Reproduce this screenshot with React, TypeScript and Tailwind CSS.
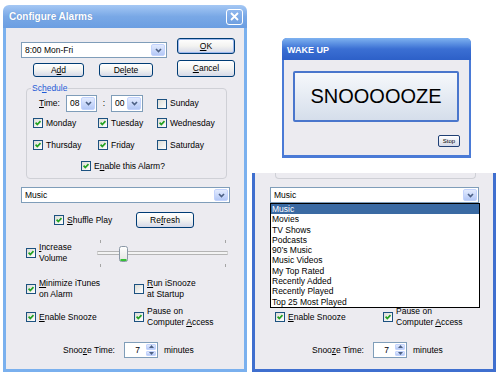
import React from 'react';

// Two "Configure Alarms" screenshots + the WAKE UP popup, XP look

const font = "font-['Liberation_Sans',Arial,sans-serif]";

const Check = ({ on = false }: { on?: boolean }) => (
  <span className="relative block w-[10px] h-[10px] shrink-0 border border-[#1c5180] bg-linear-to-br from-[#dcdcd6] to-white">
    {on && (
      <svg viewBox="0 0 8 8" className="absolute inset-0 w-[8px] h-[8px]">
        <path d="M1.6 3.7 3.3 5.5 6.5 2.2" fill="none" stroke="#21a121" strokeWidth="1.7" />
      </svg>
    )}
  </span>
);

const CheckRow = ({
  on = false, children, className = '',
}: { on?: boolean; children: React.ReactNode; className?: string }) => (
  <div className={`flex items-center gap-[3px] ${className}`}>
    <Check on={on} />
    <span>{children}</span>
  </div>
);

const DropBtn = () => (
  <span className="flex items-center justify-center w-[14px] h-full shrink-0 rounded-[2px] border border-[#c3d3fd] bg-linear-to-b from-[#e3ebfe] to-[#b4c8f6]">
    <svg viewBox="0 0 7 5" className="w-[7px] h-[5px]">
      <path d="M1 1 3.5 3.6 6 1" fill="none" stroke="#4d6185" strokeWidth="1.6" />
    </svg>
  </span>
);

const Combo = ({ text, className = '' }: { text: string; className?: string }) => (
  <div className={`flex items-center bg-white border border-[#7f9db9] p-[1px] ${className}`}>
    <span className="flex-1 pl-[2px] leading-none">{text}</span>
    <DropBtn />
  </div>
);

const Btn = ({
  children, className = '', def = false,
}: { children: React.ReactNode; className?: string; def?: boolean }) => (
  <div
    className={`flex items-center justify-center rounded-[3px] border border-[#003c74] bg-linear-to-b from-white via-[#f3f3f1] to-[#d5d9e8] ${
      def ? 'shadow-[inset_0_0_0_1px_#9db8ef]' : ''
    } ${className}`}
  >
    {children}
  </div>
);

const SpinBtn = ({ up = false }: { up?: boolean }) => (
  <span className="flex-1 flex items-center justify-center rounded-[1px] border border-[#c3d3fd] bg-linear-to-b from-[#e3ebfe] to-[#b4c8f6]">
    <svg viewBox="0 0 5 3" className="w-[5px] h-[3px]">
      <path d={up ? 'M0 3 2.5 0 5 3Z' : 'M0 0 2.5 3 5 0Z'} fill="#4d6185" />
    </svg>
  </span>
);

const Slider = () => (
  <svg width="131" height="28" viewBox="0 0 131 28">
    <defs>
      <linearGradient id="thumb" x1="0" y1="0" x2="0" y2="1">
        <stop offset="0" stopColor="#ffffff" />
        <stop offset="1" stopColor="#e4e4e0" />
      </linearGradient>
    </defs>
    <rect x="3" y="0" width="1" height="3" fill="#a5a5a5" />
    <rect x="128" y="0" width="1" height="3" fill="#a5a5a5" />
    <rect x="3" y="24" width="1" height="3" fill="#a5a5a5" />
    <rect x="128" y="24" width="1" height="3" fill="#a5a5a5" />
    <rect x="0" y="11.5" width="131" height="3" rx="1" fill="#f3f3f3" stroke="#b4b4b4" strokeWidth="1" />
    <rect x="22.5" y="6.5" width="8" height="15" rx="2" fill="url(#thumb)" stroke="#8b98a6" />
    <rect x="23.5" y="19" width="6" height="2" fill="#36c136" />
  </svg>
);

const items = [
  'Music', 'Movies', 'TV Shows', 'Podcasts', '90’s Music', 'Music Videos',
  'My Top Rated', 'Recently Added', 'Recently Played', 'Top 25 Most Played',
];

const List = () => (
  <div className="absolute left-0 right-[-1px] top-full z-10 flex flex-col bg-white border border-black">
    {items.map((t, i) => (
      <div
        key={t}
        className={`h-[10.3px] leading-[10.3px] pl-[1px] whitespace-nowrap ${i === 0 ? 'bg-[#3a6aa3] text-white' : ''}`}
      >
        {t}
      </div>
    ))}
  </div>
);

const Upper = () => (
  <div className="flex flex-col">
    <div className="flex pt-[10px]">
      <div className="ml-[15px] w-[146px] flex flex-col">
        <Combo text="8:00 Mon-Fri" className="mt-[4px] h-[16px]" />
        <div className="flex mt-[5px]">
          <Btn className="ml-[12px] w-[51px] h-[14px]">A<u>d</u>d</Btn>
          <Btn className="ml-[15px] w-[54px] h-[14px]">De<u>l</u>ete</Btn>
        </div>
      </div>
      <div className="ml-[10px] w-[58px] flex flex-col">
        <Btn def className="h-[16px]"><u>O</u>K</Btn>
        <Btn className="mt-[6px] h-[17px]"><u>C</u>ancel</Btn>
      </div>
    </div>

    <div className="relative ml-[20px] mt-[11px] w-[201px] h-[91px] border border-[#cfd0d6] rounded-[4px] pt-[6px]">
      <span className="absolute -top-[6px] left-[4px] px-[1px] bg-[#ecebf0] text-[#1f5bd6] leading-[11px]">
        Sc<u>h</u>edule
      </span>
      <div className="flex items-center h-[17px] pl-[12px]">
        <span className="w-[27px]"><u>T</u>ime:</span>
        <Combo text="08" className="w-[31px] h-full" />
        <span className="w-[14px] text-center">:</span>
        <Combo text="00" className="w-[32px] h-full" />
        <CheckRow className="ml-[14px]">Sunday</CheckRow>
      </div>
      <div className="grid grid-cols-[65px_59px_1fr] grid-rows-[20px_20px] gap-y-[2px] mt-[1px] pl-[6px] items-center">
        <CheckRow on>Monday</CheckRow>
        <CheckRow on>Tuesday</CheckRow>
        <CheckRow on>Wednesday</CheckRow>
        <CheckRow on>Thursday</CheckRow>
        <CheckRow on>Friday</CheckRow>
        <CheckRow>Saturday</CheckRow>
      </div>
      <div className="flex items-center h-[20px] mt-[1px] pl-[54px]">
        <CheckRow on>E<u>n</u>able this Alarm?</CheckRow>
      </div>
    </div>
  </div>
);

const Lower = ({ open = false }: { open?: boolean }) => {
  // rows that sit under the open list are not seen
  const hid = open ? 'invisible' : '';
  return (
    <div className="flex flex-col pb-[11px]">
      <div className="relative ml-[15px] mt-[8px] w-[209px] h-[16px]">
        <Combo text="Music" className="h-full" />
        {open && <List />}
      </div>
      <div className={`flex items-center ml-[48px] mt-[9px] h-[16px] ${hid}`}>
        <CheckRow on className="w-[82px]"><u>S</u>huffle Play</CheckRow>
        <Btn className="w-[58px] h-full">Re<u>f</u>resh</Btn>
      </div>
      <div className={`flex items-center ml-[20px] mt-[12px] h-[28px] ${hid}`}>
        <CheckRow on className="w-[71px] -mt-[2px]">
          <span className="block leading-[11px]"><u>I</u>ncrease<br />Volume</span>
        </CheckRow>
        <Slider />
      </div>
      <div className={`flex items-center ml-[20px] mt-[10px] h-[22px] ${hid}`}>
        <CheckRow on className="w-[108px]">
          <span className="block leading-[11px]"><u>M</u>inimize iTunes<br />on Alarm</span>
        </CheckRow>
        <CheckRow>
          <span className="block leading-[11px]"><u>R</u>un iSnooze<br />at Startup</span>
        </CheckRow>
      </div>
      <div className="flex items-center ml-[20px] mt-[6px] h-[22px]">
        <CheckRow on className="w-[108px]"><u>E</u>nable Snooze</CheckRow>
        <CheckRow on>
          <span className="block leading-[11px]">Pause on<br />Computer <u>A</u>ccess</span>
        </CheckRow>
      </div>
      <div className="flex items-center ml-[57px] mt-[14px] h-[16px]">
        <span className="w-[61px]">Snoo<u>z</u>e Time:</span>
        <div className="flex items-center w-[34px] h-full bg-white border border-[#7f9db9] p-[1px]">
          <span className="flex-1 text-right pr-[6px] leading-none">7</span>
          <div className="flex flex-col gap-px w-[10px] h-full">
            <SpinBtn up />
            <SpinBtn />
          </div>
        </div>
        <span className="ml-[6px]">minutes</span>
      </div>
    </div>
  );
};

const TitleBar = () => (
  <div className="flex items-center h-[23px] pl-[6px] bg-linear-to-b from-[#a5c8f4] via-[#79a8e6] to-[#6b9ee2]">
    <span className="text-white font-bold text-[10px] leading-none [text-shadow:0_0_1px_#5b86c4]">
      Configure Alarms
    </span>
    <span className="ml-auto mr-[4px] flex items-center justify-center w-[17px] h-[16px] rounded-[3px] border border-white bg-linear-to-b from-[#8fb7ee] to-[#6f9fe0]">
      <svg viewBox="0 0 9 9" className="w-[9px] h-[9px]">
        <path d="M1 1 8 8M8 1 1 8" stroke="white" strokeWidth="1.8" />
      </svg>
    </span>
  </div>
);

const WakeUp = () => (
  <div className="ml-[30px] mt-[38px] w-[189px] h-[120px] flex flex-col rounded-t-[5px] overflow-hidden bg-[#4a7ad6]">
    <div className="flex items-center h-[22px] pl-[5px] pt-[2px] bg-linear-to-b from-[#7fb2f0] via-[#3b6fd3] to-[#2d60c8]">
      <span className="text-white font-bold text-[9px] leading-none">WAKE UP</span>
    </div>
    <div className="flex-1 flex flex-col mx-[2px] mb-[3px] bg-[#ecebf0]">
      <div className="ml-[9px] mt-[11px] w-[166px] h-[51px] flex items-center justify-center rounded-[2px] border-2 border-[#4a76cc] bg-linear-to-b from-[#f6f8fb] to-[#d5deeb] text-[20px]">
        SNOOOOOZE
      </div>
      <div className="self-end mr-[9px] mt-[13px] w-[22px] h-[12px] flex items-center justify-center rounded-[2px] border border-[#1f3f75] bg-linear-to-b from-white to-[#d5d9e8] text-[6px] leading-none">
        Stop
      </div>
    </div>
  </div>
);

export default function App() {
  return (
    <div className={`flex w-[500px] h-[376px] bg-white overflow-hidden text-[8.5px] leading-[11px] text-black ${font}`}>
      <div className="ml-[3px] mt-[5px] w-[244px] self-start flex flex-col rounded-t-[6px] overflow-hidden">
        <TitleBar />
        <div className="border-x-[3px] border-b-[3px] border-[#7ab0ee] bg-[#ecebf0]">
          <Upper />
          <Lower />
        </div>
      </div>
      <div className="ml-[5px] w-[244px] flex flex-col">
        <WakeUp />
        <div className="mt-[15px] border-x-[3px] border-b-[3px] border-[#3f6fcf] bg-[#ecebf0]">
          <div className="ml-[20px] w-[201px] h-[6px] border-x border-b border-[#cfd0d6] rounded-b-[4px]" />
          <Lower open />
        </div>
      </div>
    </div>
  );
}
